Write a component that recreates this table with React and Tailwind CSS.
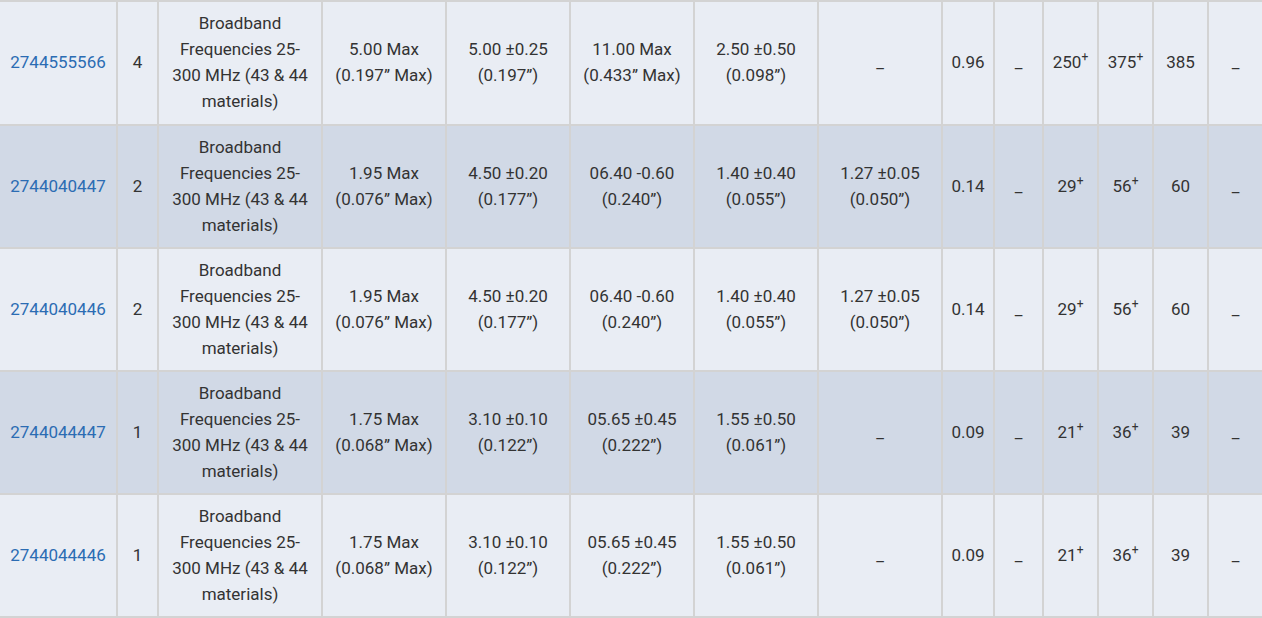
const rows = [
  {
    part: '2744555566',
    turns: '4',
    a: ['5.00 Max', '(0.197” Max)'],
    b: ['5.00 ±0.25', '(0.197”)'],
    c: ['11.00 Max', '(0.433” Max)'],
    d: ['2.50 ±0.50', '(0.098”)'],
    e: null,
    wt: '0.96',
    z1: '250',
    z2: '375',
    z3: '385',
  },
  {
    part: '2744040447',
    turns: '2',
    a: ['1.95 Max', '(0.076” Max)'],
    b: ['4.50 ±0.20', '(0.177”)'],
    c: ['06.40 -0.60', '(0.240”)'],
    d: ['1.40 ±0.40', '(0.055”)'],
    e: ['1.27 ±0.05', '(0.050”)'],
    wt: '0.14',
    z1: '29',
    z2: '56',
    z3: '60',
  },
  {
    part: '2744040446',
    turns: '2',
    a: ['1.95 Max', '(0.076” Max)'],
    b: ['4.50 ±0.20', '(0.177”)'],
    c: ['06.40 -0.60', '(0.240”)'],
    d: ['1.40 ±0.40', '(0.055”)'],
    e: ['1.27 ±0.05', '(0.050”)'],
    wt: '0.14',
    z1: '29',
    z2: '56',
    z3: '60',
  },
  {
    part: '2744044447',
    turns: '1',
    a: ['1.75 Max', '(0.068” Max)'],
    b: ['3.10 ±0.10', '(0.122”)'],
    c: ['05.65 ±0.45', '(0.222”)'],
    d: ['1.55 ±0.50', '(0.061”)'],
    e: null,
    wt: '0.09',
    z1: '21',
    z2: '36',
    z3: '39',
  },
  {
    part: '2744044446',
    turns: '1',
    a: ['1.75 Max', '(0.068” Max)'],
    b: ['3.10 ±0.10', '(0.122”)'],
    c: ['05.65 ±0.45', '(0.222”)'],
    d: ['1.55 ±0.50', '(0.061”)'],
    e: null,
    wt: '0.09',
    z1: '21',
    z2: '36',
    z3: '39',
  },
];

function Cell({ bg, children }) {
  return (
    <div className={`${bg} flex items-center justify-center text-center px-1 pb-[2px]`}>
      <div>{children}</div>
    </div>
  );
}

function Two({ lines }) {
  if (!lines) return <span>_</span>;
  return (
    <>
      {lines[0]}
      <br />
      {lines[1]}
    </>
  );
}

function Plus({ n }) {
  return (
    <span>
      {n}
      <sup className="text-[12px] -top-[7px]">+</sup>
    </span>
  );
}

export default function App() {
  return (
    <div className="w-[1262px] h-[618px] overflow-hidden bg-[#d3d3d3] py-[2px] font-['Roboto',sans-serif] text-[17px] leading-[26px] text-[#333333]">
      <div className="grid grid-cols-[116px_39px_162px_122px_122px_122px_122px_122px_50px_47px_53px_53px_53px_53px] grid-rows-[122px_121px_121px_121px_121px] gap-[2px]">
        {rows.map((r, i) => {
          const bg = i % 2 === 0 ? 'bg-[#e9edf4]' : 'bg-[#d1d9e6]';
          return [
            <Cell key={`${i}-0`} bg={bg}>
              <a href="#" className="text-[#2b6cb3]">{r.part}</a>
            </Cell>,
            <Cell key={`${i}-1`} bg={bg}>{r.turns}</Cell>,
            <Cell key={`${i}-2`} bg={bg}>
              Broadband
              <br />
              Frequencies 25-
              <br />
              300 MHz (43 &amp; 44
              <br />
              materials)
            </Cell>,
            <Cell key={`${i}-3`} bg={bg}><Two lines={r.a} /></Cell>,
            <Cell key={`${i}-4`} bg={bg}><Two lines={r.b} /></Cell>,
            <Cell key={`${i}-5`} bg={bg}><Two lines={r.c} /></Cell>,
            <Cell key={`${i}-6`} bg={bg}><Two lines={r.d} /></Cell>,
            <Cell key={`${i}-7`} bg={bg}><Two lines={r.e} /></Cell>,
            <Cell key={`${i}-8`} bg={bg}>{r.wt}</Cell>,
            <Cell key={`${i}-9`} bg={bg}>_</Cell>,
            <Cell key={`${i}-10`} bg={bg}><Plus n={r.z1} /></Cell>,
            <Cell key={`${i}-11`} bg={bg}><Plus n={r.z2} /></Cell>,
            <Cell key={`${i}-12`} bg={bg}>{r.z3}</Cell>,
            <Cell key={`${i}-13`} bg={bg}>_</Cell>,
          ];
        })}
      </div>
    </div>
  );
}
